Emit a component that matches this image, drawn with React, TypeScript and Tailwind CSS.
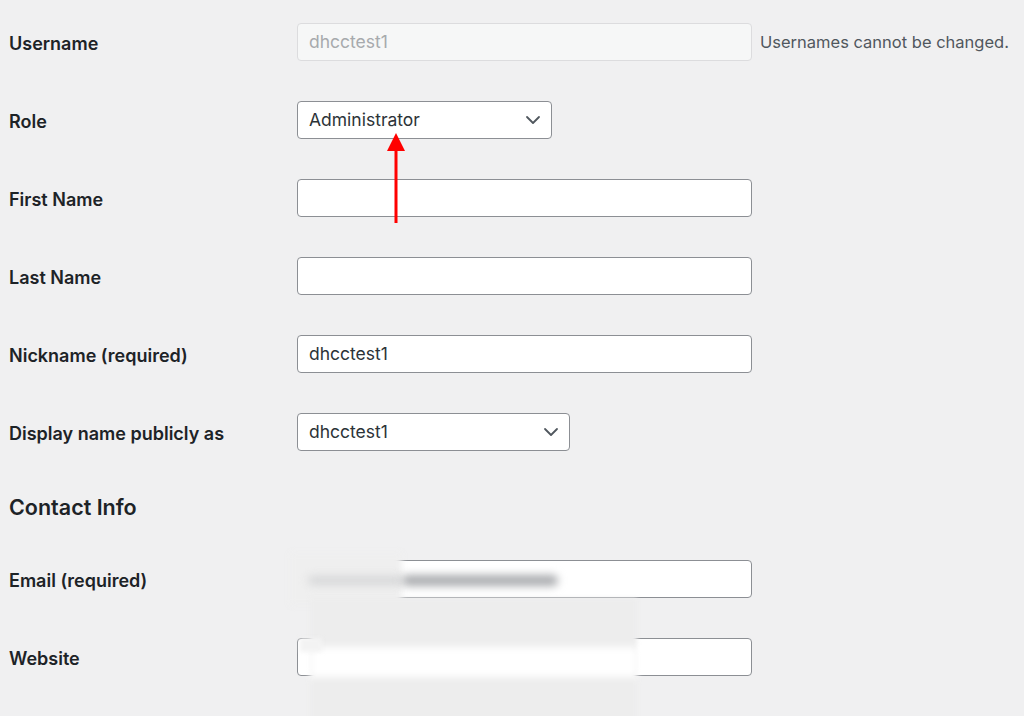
import React from "react";

const labelCls = "w-[297px] shrink-0 pl-[9px] pt-[2px] text-[18px] font-semibold text-[#1d2327]";
const inputCls =
  "h-[38px] rounded-[4px] border border-[#8c8f94] bg-white px-[11px] flex items-center text-[17.5px] text-[#2c3338]";

function Chevron() {
  return (
    <svg width="16" height="10" viewBox="0 0 16 10" className="shrink-0">
      <path d="M2 2 L8 8 L14 2" fill="none" stroke="#50575e" strokeWidth="1.8" strokeLinecap="round" strokeLinejoin="round" />
    </svg>
  );
}

function Row({ label, children }: { label: string; children: React.ReactNode }) {
  return (
    <div className="flex items-center py-[20px]">
      <div className={labelCls}>{label}</div>
      {children}
    </div>
  );
}

export default function App() {
  return (
    <div className="relative h-[716px] overflow-hidden bg-[#f0f0f1] font-['Inter',sans-serif]">
      <div className="pt-[3px]">
        <Row label="Username">
          <div className="h-[38px] w-[455px] rounded-[4px] border border-[#dcdcde] bg-[#f6f7f7] px-[11px] flex items-center text-[17.5px] text-[#a7aaad]">
            dhcctest1
          </div>
          <span className="ml-[8px] text-[16.5px] text-[#50575e]">Usernames cannot be changed.</span>
        </Row>
        <Row label="Role">
          <div className={`${inputCls} w-[255px] justify-between pr-[10px]`}>
            <span>Administrator</span>
            <Chevron />
          </div>
        </Row>
        <Row label="First Name">
          <div className={`${inputCls} w-[455px]`} />
        </Row>
        <Row label="Last Name">
          <div className={`${inputCls} w-[455px]`} />
        </Row>
        <Row label="Nickname (required)">
          <div className={`${inputCls} w-[455px]`}>dhcctest1</div>
        </Row>
        <Row label="Display name publicly as">
          <div className={`${inputCls} w-[273px] justify-between pr-[10px]`}>
            <span>dhcctest1</span>
            <Chevron />
          </div>
        </Row>

        <h2 className="mt-[23px] mb-[20px] h-[26px] pl-[9px] text-[21.5px] leading-[26px] font-semibold text-[#1d2327]">
          Contact Info
        </h2>

        <Row label="Email (required)">
          <div className={`${inputCls} w-[455px]`} />
        </Row>
        <Row label="Website">
          <div className={`${inputCls} w-[455px]`} />
        </Row>
        <Row label="">
          <div className={`${inputCls} w-[455px]`} />
        </Row>
      </div>

      {/* blurred-out personal data */}
      <div className="absolute left-[290px] top-[553px] h-[52px] w-[112px] bg-[#efefef] blur-[3px]" />
      <div className="absolute left-[308px] top-[576px] h-[9px] w-[94px] rounded-full bg-[#d6d7d8] blur-[4px]" />
      <div className="absolute left-[402px] top-[575px] h-[11px] w-[156px] rounded-full bg-[#a9abae] blur-[4px]" />
      <div className="absolute left-[310px] top-[598px] h-[130px] w-[327px] bg-[#ededed] blur-[2px]">
        <div className="mt-[49px] h-[30px] w-full bg-white blur-[3px]" />
      </div>
      <div className="absolute left-[300px] top-[638px] h-[14px] w-[22px] bg-[#f3f3f3] blur-[2px]" />

      {/* red arrow */}
      <svg className="absolute left-[386px] top-[132px]" width="20" height="92" viewBox="0 0 20 92">
        <polygon points="10,1 19,19 1,19" fill="#ff0000" />
        <rect x="8.5" y="17" width="3" height="74" fill="#ff0000" />
      </svg>
    </div>
  );
}
